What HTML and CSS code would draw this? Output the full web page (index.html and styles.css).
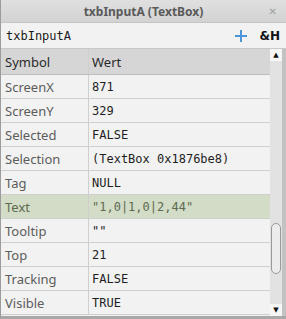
FILE: index.html
```html
<!DOCTYPE html>
<html lang="de">
  <head>
    <meta charset="UTF-8" />
    <title>txbInputA (TextBox)</title>
    <link rel="stylesheet" href="styles.css">
  </head>
  <body>
    <div class="window">
      <div class="titlebar">
        <span class="title">txbInputA (TextBox)</span>
        <span class="close">&#x2715;</span>
      </div>
      <div class="toolbar">
        <span class="name">txbInputA</span>
        <svg class="plus" width="14" height="14" viewBox="0 0 14 14">
          <path d="M7 1v12M1 7h12" stroke="#4d94d8" stroke-width="2" />
        </svg>
        <span class="hex">&amp;H</span>
      </div>
      <div class="grid-wrap">
        <div class="table">
          <div class="row head">
            <div class="key">Symbol</div>
            <div class="val">Wert</div>
          </div>
          <div class="row"><div class="key">ScreenX</div><div class="val">871</div></div>
          <div class="row"><div class="key">ScreenY</div><div class="val">329</div></div>
          <div class="row"><div class="key">Selected</div><div class="val">FALSE</div></div>
          <div class="row"><div class="key">Selection</div><div class="val">(TextBox 0x1876be8)</div></div>
          <div class="row"><div class="key">Tag</div><div class="val">NULL</div></div>
          <div class="row current"><div class="key">Text</div><div class="val">"1,0|1,0|2,44"</div></div>
          <div class="row"><div class="key">Tooltip</div><div class="val">""</div></div>
          <div class="row"><div class="key">Top</div><div class="val">21</div></div>
          <div class="row"><div class="key">Tracking</div><div class="val">FALSE</div></div>
          <div class="row"><div class="key">Visible</div><div class="val">TRUE</div></div>
        </div>
        <div class="scrollbar">
          <div class="arrow up">&#x25B2;</div>
          <div class="track"><div class="thumb"></div></div>
          <div class="arrow down">&#x25BC;</div>
        </div>
      </div>
    </div>
  </body>
</html>
```

FILE: styles.css
```css
body {
  margin: 0;
  font-family: "Noto Sans", "DejaVu Sans", sans-serif;
  background: #f2f2f2;
}
.window {
  width: 286px;
  height: 319px;
  box-sizing: border-box;
  display: flex;
  flex-direction: column;
  border-left: 1px solid #9c9c9c;
  border-bottom: 3px solid #a8a8a8;
  overflow: hidden;
}
.titlebar {
  height: 22px;
  flex: none;
  background: linear-gradient(#e0e0e0, #d2d2d2);
  display: flex;
  align-items: center;
  justify-content: center;
  position: relative;
  border-bottom: 1px solid #c4c4c4;
}
.title {
  font-size: 12px;
  font-weight: bold;
  color: #5a5a5a;
}
.close {
  position: absolute;
  right: 9px;
  top: 4px;
  font-size: 10px;
  font-weight: bold;
  color: #a0a0a0;
}
.toolbar {
  height: 25px;
  flex: none;
  display: flex;
  align-items: center;
  padding: 0 6px 0 5px;
  background: #f2f2f2;
  border-bottom: 1px solid #c8c8c8;
}
.name {
  font-family: "DejaVu Sans Mono", monospace;
  font-size: 12px;
  color: #1a1a1a;
  flex: 1;
}
.plus {
  margin-right: 11px;
}
.hex {
  font-family: "DejaVu Sans", sans-serif;
  font-weight: bold;
  font-size: 12px;
  color: #111;
}
.grid-wrap {
  flex: 1;
  display: flex;
  min-height: 0;
  border-right: 4px solid #c2c2c2;
}
.table {
  flex: 1;
  overflow: hidden;
}
.row {
  display: flex;
  height: 24px;
  box-sizing: border-box;
  border-bottom: 1px solid #cfcfcf;
  align-items: center;
  background: #f2f2f2;
}
.row.head {
  height: 26px;
  background: #d6d6d6;
  border-bottom: 1px solid #bdbdbd;
}
.row.head .key,
.row.head .val {
  color: #2a2a2a;
  font-family: "Noto Sans", sans-serif;
  font-size: 13px;
}
.key {
  width: 83px;
  padding-left: 4px;
  height: 100%;
  display: flex;
  align-items: center;
  border-right: 1px solid #cfcfcf;
  font-size: 13px;
  color: #5c5c5c;
}
.val {
  padding-left: 3px;
  font-family: "DejaVu Sans Mono", monospace;
  font-size: 12px;
  color: #1e1e1e;
  white-space: nowrap;
}
.row.current {
  background: #d2dcc6;
}
.row.current .key,
.row.current .val {
  color: #5e6a50;
}
.scrollbar {
  width: 12px;
  flex: none;
  display: flex;
  flex-direction: column;
  background: #e2e2e2;
}
.arrow {
  height: 12px;
  flex: none;
  background: #f6f6f6;
  font-size: 7px;
  color: #111;
  text-align: center;
  line-height: 12px;
}
.track {
  flex: 1;
  position: relative;
}
.thumb {
  position: absolute;
  left: 1px;
  right: 1px;
  top: 162px;
  height: 51px;
  border: 1px solid #999;
  border-radius: 5px;
  background: #ececec;
  box-sizing: border-box;
}
```
